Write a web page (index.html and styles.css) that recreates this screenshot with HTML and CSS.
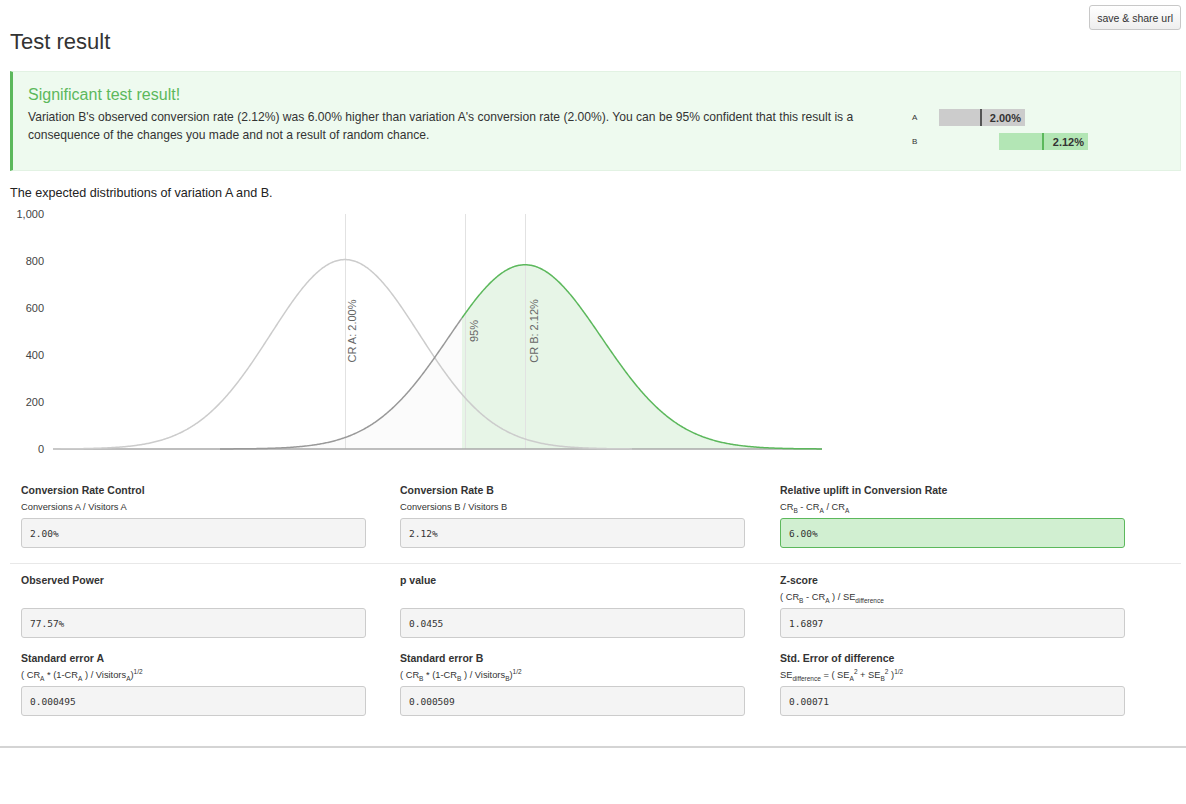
FILE: index.html
```html
<!DOCTYPE html>
<html lang="en">
<head>
<meta charset="utf-8">
<title>Test result</title>
<link rel="stylesheet" href="styles.css">
</head>
<body>
<div class="page">
  <div class="topbar">
    <button class="share-btn" type="button">save &amp; share url</button>
  </div>
  <h1 class="title">Test result</h1>

  <div class="alert">
    <div class="alert-text">
      <h2 class="alert-title">Significant test result!</h2>
      <p class="alert-body">Variation B's observed conversion rate (2.12%) was 6.00% higher than variation A's conversion rate (2.00%). You can be 95% confident that this result is a consequence of the changes you made and not a result of random chance.</p>
    </div>
    <div class="bars">
      <div class="bar-row">
        <span class="bar-label">A</span>
        <div class="bar-track">
          <div class="bar bar-a" style="margin-left:0px;width:86px">
            <span class="bar-mark" style="left:41px"></span>
            <span class="bar-value">2.00%</span>
          </div>
        </div>
      </div>
      <div class="bar-row">
        <span class="bar-label">B</span>
        <div class="bar-track">
          <div class="bar bar-b" style="margin-left:60px;width:89px">
            <span class="bar-mark" style="left:43px"></span>
            <span class="bar-value">2.12%</span>
          </div>
        </div>
      </div>
    </div>
  </div>

  <p class="chart-title">The expected distributions of variation A and B.</p>
  <div class="chart">
    <svg id="dist" width="840" height="260" viewBox="0 201 840 260" xmlns="http://www.w3.org/2000/svg">
      <g class="ticks">
        <text x="44" y="218">1,000</text>
        <text x="44" y="265">800</text>
        <text x="44" y="312">600</text>
        <text x="44" y="359">400</text>
        <text x="44" y="406">200</text>
        <text x="44" y="453">0</text>
      </g>
      <path id="fillBgray" class="fill-gray" d=""></path>
      <path id="fillBgreen" class="fill-green" d=""></path>
      <line class="vline" x1="345.5" y1="214" x2="345.5" y2="449"></line>
      <line class="vline" x1="465.5" y1="214" x2="465.5" y2="449"></line>
      <line class="vline" x1="525.5" y1="214" x2="525.5" y2="449"></line>
      <line class="baseline" x1="53" y1="449" x2="822" y2="449"></line>
      <path id="curveA" class="curve-a" d=""></path>
      <path id="curveBgray" class="curve-b-gray" d=""></path>
      <path id="curveBgreen" class="curve-b-green" d=""></path>
      <g class="vlabels">
        <text transform="translate(356,331) rotate(-90)">CR A: 2.00%</text>
        <text transform="translate(478,331) rotate(-90)">95%</text>
        <text transform="translate(538,331) rotate(-90)">CR B: 2.12%</text>
      </g>
    </svg>
  </div>

  <div class="stats stats-first">
    <div class="field">
      <div class="field-label">Conversion Rate Control</div>
      <div class="field-sub">Conversions A / Visitors A</div>
      <div class="field-input">2.00%</div>
    </div>
    <div class="field">
      <div class="field-label">Conversion Rate B</div>
      <div class="field-sub">Conversions B / Visitors B</div>
      <div class="field-input">2.12%</div>
    </div>
    <div class="field">
      <div class="field-label">Relative uplift in Conversion Rate</div>
      <div class="field-sub">CR<sub>B</sub> - CR<sub>A</sub> / CR<sub>A</sub></div>
      <div class="field-input field-input-good">6.00%</div>
    </div>
  </div>

  <hr class="separator">

  <div class="stats stats-rest">
    <div class="field">
      <div class="field-label">Observed Power</div>
      <div class="field-sub"></div>
      <div class="field-input">77.57%</div>
    </div>
    <div class="field">
      <div class="field-label">p value</div>
      <div class="field-sub"></div>
      <div class="field-input">0.0455</div>
    </div>
    <div class="field">
      <div class="field-label">Z-score</div>
      <div class="field-sub">( CR<sub>B</sub> - CR<sub>A</sub> ) / SE<sub>difference</sub></div>
      <div class="field-input">1.6897</div>
    </div>
    <div class="field">
      <div class="field-label">Standard error A</div>
      <div class="field-sub">( CR<sub>A</sub> * (1-CR<sub>A</sub> ) / Visitors<sub>A</sub>)<sup>1/2</sup></div>
      <div class="field-input">0.000495</div>
    </div>
    <div class="field">
      <div class="field-label">Standard error B</div>
      <div class="field-sub">( CR<sub>B</sub> * (1-CR<sub>B</sub> ) / Visitors<sub>B</sub>)<sup>1/2</sup></div>
      <div class="field-input">0.000509</div>
    </div>
    <div class="field">
      <div class="field-label">Std. Error of difference</div>
      <div class="field-sub">SE<sub>difference</sub> = ( SE<sub>A</sub><sup>2</sup> + SE<sub>B</sub><sup>2</sup> )<sup>1/2</sup></div>
      <div class="field-input">0.00071</div>
    </div>
  </div>

  <div class="bottom-rule"></div>
</div>
<script src="script.js"></script>
</body>
</html>
```

FILE: styles.css
```css
* { box-sizing: border-box; }

html, body {
  margin: 0;
  padding: 0;
  background: #fff;
}

body {
  font-family: "Liberation Sans", Arial, Helvetica, sans-serif;
  color: #333;
  width: 1186px;
}

.page {
  width: 1186px;
}

.topbar {
  height: 30px;
  display: flex;
  justify-content: flex-end;
  align-items: flex-start;
  padding: 5px 5px 0 0;
}

.share-btn {
  height: 25px;
  padding: 0 7px;
  font-family: "Liberation Sans", Arial, sans-serif;
  font-size: 10.5px;
  color: #333;
  background: linear-gradient(#ffffff, #eeeeee);
  border: 1px solid #c8c8c8;
  border-radius: 3px;
}

.title {
  margin: 0 0 0 10px;
  font-size: 22px;
  line-height: 24px;
  font-weight: normal;
  color: #333;
}

.alert {
  margin: 17px 5px 0 10px;
  height: 100px;
  display: flex;
  background: #eefaef;
  border: 1px solid #e2f2e3;
  border-left: 3px solid #5cb85c;
  padding: 13px 15px;
}

.alert-text {
  flex: 0 0 850px;
}

.alert-title {
  margin: 0;
  font-size: 16px;
  line-height: 20px;
  font-weight: normal;
  color: #5cb85c;
}

.alert-body {
  margin: 3px 0 0 0;
  font-size: 12.1px;
  line-height: 18px;
  color: #333;
}

.bars {
  margin: 24px 0 0 34px;
  display: flex;
  flex-direction: column;
  gap: 7px;
}

.bar-row {
  display: flex;
  align-items: center;
  height: 17px;
}

.bar-label {
  flex: 0 0 27px;
  font-size: 8px;
  color: #333;
}

.bar-track {
  width: 160px;
  height: 17px;
  display: flex;
}

.bar {
  position: relative;
  height: 17px;
  display: flex;
  align-items: center;
  justify-content: flex-end;
  padding-right: 4px;
}

.bar-a { background: #cccccc; }
.bar-b { background: #b3e6b5; }

.bar-mark {
  position: absolute;
  top: 0;
  width: 2px;
  height: 17px;
}

.bar-a .bar-mark { background: #555; }
.bar-b .bar-mark { background: #5cb85c; }

.bar-value {
  font-size: 11px;
  font-weight: bold;
  color: #333;
}

.chart-title {
  margin: 14px 0 0 10px;
  font-size: 12.6px;
  line-height: 16px;
  color: #222;
}

.chart {
  height: 260px;
}

.chart svg {
  display: block;
}

.ticks text {
  font-family: "Liberation Sans", Arial, sans-serif;
  font-size: 11px;
  fill: #444;
  text-anchor: end;
}

.vlabels text {
  font-family: "Liberation Sans", Arial, sans-serif;
  font-size: 11px;
  fill: #666;
  text-anchor: middle;
}

.fill-gray { fill: #fbfbfb; stroke: none; }
.fill-green { fill: #e7f5e7; stroke: none; }

.vline { stroke: #e2e2e2; stroke-width: 1; }
.baseline { stroke: #a8a8a8; stroke-width: 1.5; }

.curve-a, .curve-b-gray, .curve-b-green {
  fill: none;
  stroke-width: 1.5;
  stroke-linejoin: round;
}
.curve-a { stroke: #cccccc; }
.curve-b-gray { stroke: #999999; }
.curve-b-green { stroke: #5cb85c; }

.stats {
  display: grid;
  grid-template-columns: 379px 380px 380px;
  margin-left: 21px;
}

.stats-first {
  margin-top: 22px;
}

.stats-rest {
  margin-top: 9px;
  row-gap: 13px;
}

.field-label {
  font-size: 10.5px;
  line-height: 14px;
  font-weight: bold;
  color: #333;
}

.field-sub {
  margin-top: 4px;
  height: 12px;
  font-size: 9.3px;
  line-height: 12px;
  color: #333;
  white-space: nowrap;
}

.field-sub sub,
.field-sub sup {
  font-size: 6.5px;
  line-height: 0;
}

.field-input {
  margin-top: 5px;
  width: 345px;
  height: 30px;
  padding: 0 8px;
  display: flex;
  align-items: center;
  background: #f4f4f4;
  border: 1px solid #cccccc;
  border-radius: 3px;
  font-family: "DejaVu Sans Mono", "Liberation Mono", monospace;
  font-size: 9.5px;
  color: #333;
}

.field-input-good {
  background: #d1efd1;
  border-color: #5cb85c;
}

.separator {
  margin: 15px 5px 0 10px;
  height: 0;
  border: 0;
  border-top: 1px solid #e8e8e8;
}

.bottom-rule {
  margin-top: 30px;
  height: 2px;
  background: #d4d4d4;
  box-shadow: 0 1px 2px rgba(0, 0, 0, 0.08);
}
```

FILE: script.js
```js
(function () {
  var BASE = 449;
  var SCALE = 0.235;

  function yOf(v) { return BASE - v * SCALE; }
  function pdf(x, m, s, p) { return p * Math.exp(-(x - m) * (x - m) / (2 * s * s)); }

  function line(m, s, p, x0, x1) {
    var d = '';
    for (var x = x0; x <= x1; x += 1) {
      d += (x === x0 ? 'M' : 'L') + x.toFixed(1) + ',' + yOf(pdf(x, m, s, p)).toFixed(2);
    }
    return d;
  }

  function area(m, s, p, x0, x1) {
    return line(m, s, p, x0, x1) + 'L' + x1 + ',' + BASE + 'L' + x0 + ',' + BASE + 'Z';
  }

  var A = { m: 345, s: 74.25, p: 806 };
  var B = { m: 525, s: 76.35, p: 784 };

  function set(id, d) {
    var el = document.getElementById(id);
    if (el) { el.setAttribute('d', d); }
  }

  set('fillBgray', area(B.m, B.s, B.p, 220, 462));
  set('fillBgreen', area(B.m, B.s, B.p, 462, 822));
  set('curveA', line(A.m, A.s, A.p, 53, 632));
  set('curveBgray', line(B.m, B.s, B.p, 220, 462));
  set('curveBgreen', line(B.m, B.s, B.p, 462, 822));
})();
```
